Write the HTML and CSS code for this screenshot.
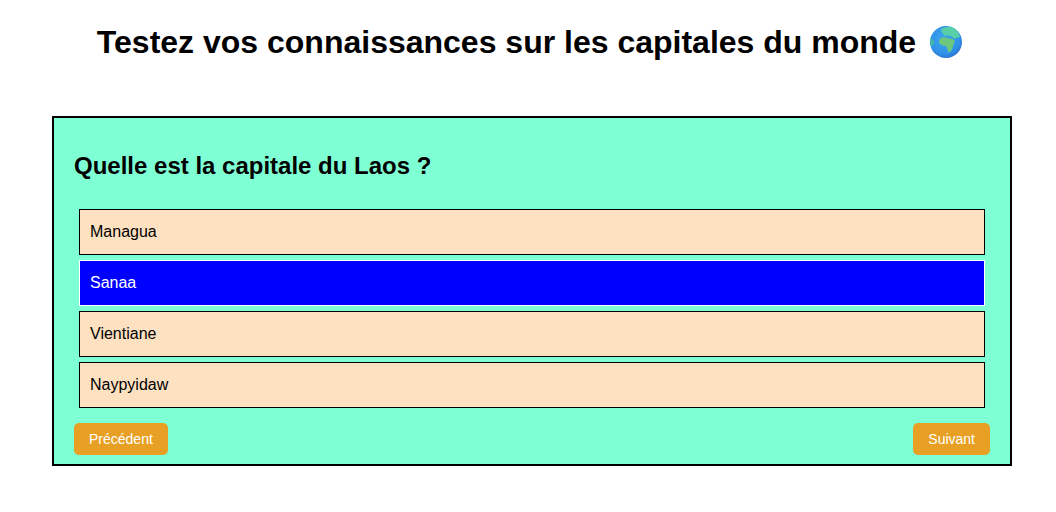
FILE: index.html
```html
<!DOCTYPE html>
<html lang="fr">
<head>
    <meta charset="UTF-8">
    <meta name="viewport" content="width=device-width, initial-scale=1.0">
    <title>Quiz capitales</title>
    <link rel="stylesheet" href="styles.css">
</head>
<body>
    <h1 class="title">
        Testez vos connaissances sur les capitales du monde
        <svg class="globe" viewBox="0 0 32 32" aria-hidden="true">
            <defs>
                <radialGradient id="sea" cx="0.45" cy="0.4" r="0.68">
                    <stop offset="0" stop-color="#3fa8ee"/>
                    <stop offset="0.7" stop-color="#2f90e8"/>
                    <stop offset="1" stop-color="#2a62c4"/>
                </radialGradient>
            </defs>
            <circle cx="16" cy="16" r="16" fill="url(#sea)"/>
            <path fill="#58cfa6" d="M11 3 C14 1 20 0 24 2 C27 4 29 7 30 11 C28 12 26 11 25 13 C23 12 22 10 20 10 C18 9 16 10 14 9 C13 7 10 5 11 3 Z"/>
            <path fill="#6cc67c" d="M10 13 C12 11 15 11 17 12 C19 13 22 12 24 14 C25 15 25 16 24 17 C23 19 23 22 21 25 C20 26 19 27 18 26 C18 24 17 22 16 20 C14 20 11 19 9 17 C9 15 9 14 10 13 Z"/>
            <path fill="#45b9a4" d="M0.5 13 C2 12 4 14 4 17 C4 19 2 20 1 20 C0.3 18 0.2 15 0.5 13 Z"/>
        </svg>
    </h1>
    <div class="quiz">
        <h2 class="question">Quelle est la capitale du Laos ?</h2>
        <div class="options">
            <div class="option">Managua</div>
            <div class="option selected">Sanaa</div>
            <div class="option">Vientiane</div>
            <div class="option">Naypyidaw</div>
        </div>
        <div class="nav">
            <button class="btn">Précédent</button>
            <button class="btn">Suivant</button>
        </div>
    </div>
</body>
</html>
```

FILE: styles.css
```css
body {
    font-family: "Liberation Sans", Arial, sans-serif;
    background: #fff;
    color: #000;
    margin: 0;
    padding: 0 44px 0 52px;
}
.title {
    display: flex;
    justify-content: center;
    align-items: center;
    gap: 14px;
    font-size: 32px;
    font-weight: bold;
    margin: 0 5px 57px 0;
    padding-top: 25px;
    height: 34px;
}
.globe {
    width: 32px;
    height: 32px;
}
.quiz {
    background: #7fffd4;
    border: 2px solid #000;
    padding: 20px;
    height: 306px;
}
.question {
    font-size: 24px;
    font-weight: bold;
    margin: 0;
    padding-top: 15px;
    line-height: 25px;
}
.options {
    display: flex;
    flex-direction: column;
    gap: 5px;
    margin: 31px 5px 15px;
}
.option {
    background: #fee1c0;
    border: 1px solid #000;
    font-size: 16px;
    height: 44px;
    line-height: 44px;
    padding-left: 10px;
}
.option.selected {
    background: #00f;
    border-color: #fff;
    color: #fff;
}
.nav {
    display: flex;
    justify-content: space-between;
}
.btn {
    background: #e7a024;
    color: #fff;
    border: none;
    border-radius: 5px;
    font-family: inherit;
    font-size: 14px;
    height: 32px;
    padding: 0 15px;
}
```
